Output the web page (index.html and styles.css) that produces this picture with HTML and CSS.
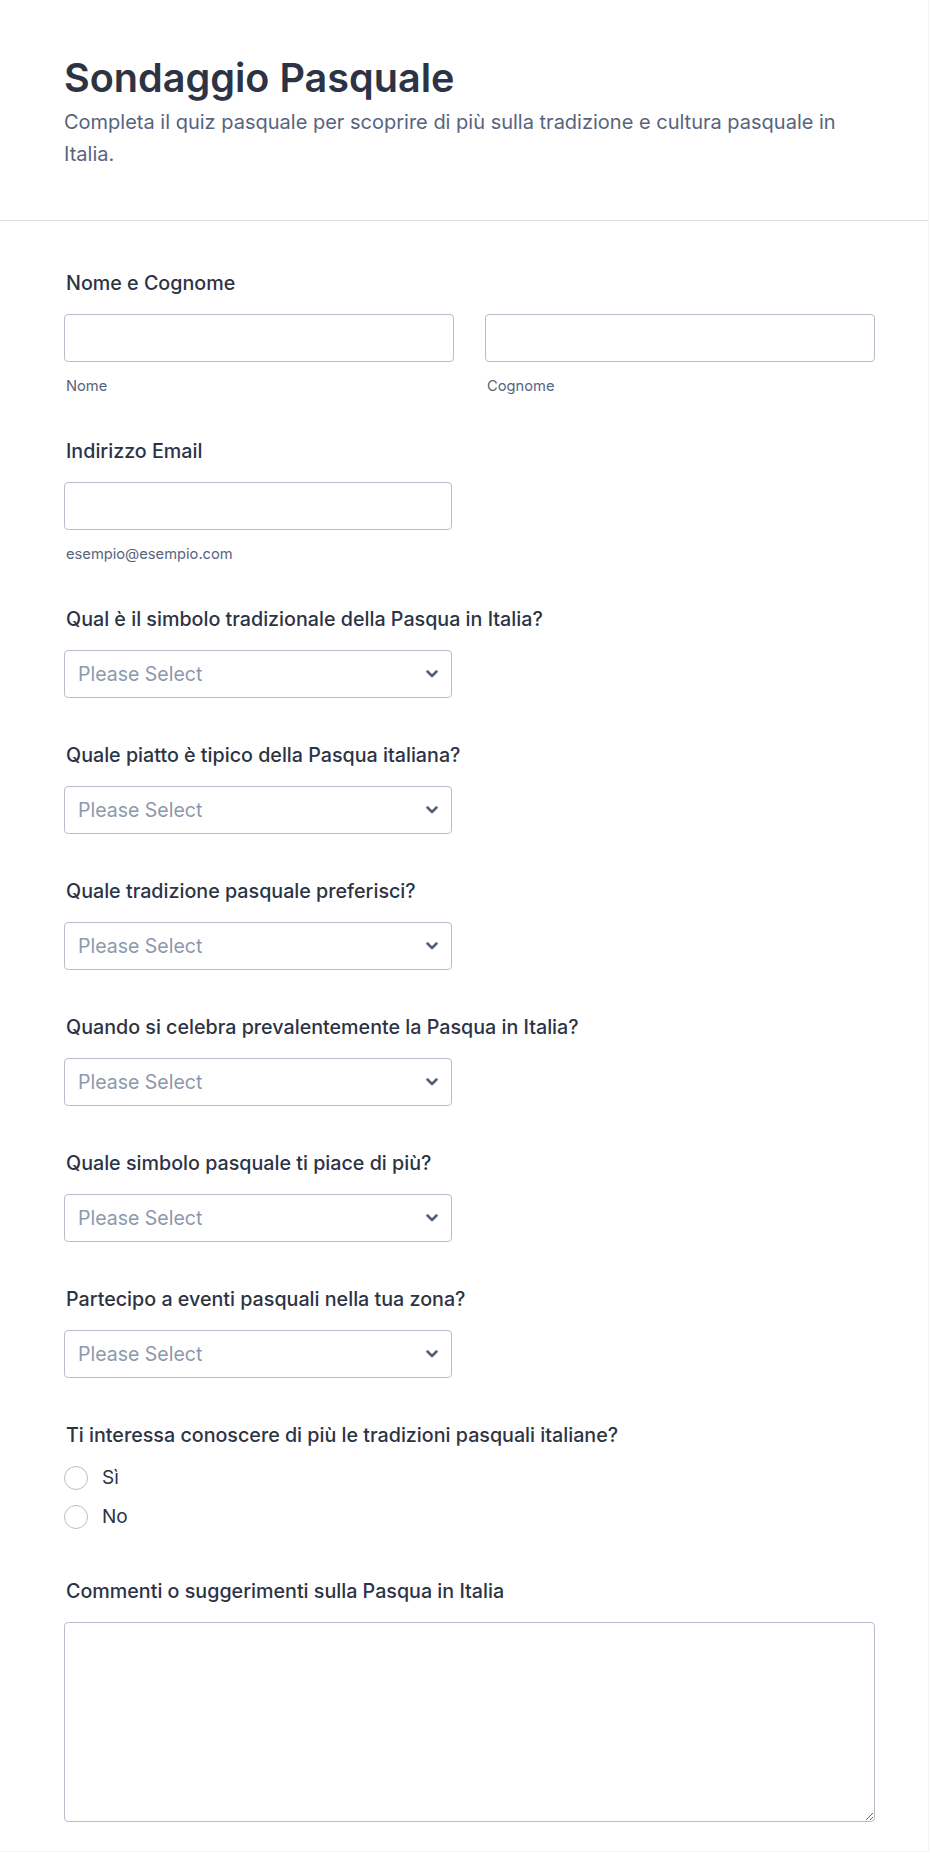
FILE: index.html
```html
<!DOCTYPE html>
<html lang="it">
<head>
<meta charset="utf-8">
<title>Sondaggio Pasquale</title>
<link rel="stylesheet" href="styles.css">
</head>
<body>
<div class="page">
  <header class="header">
    <h1 class="title">Sondaggio Pasquale</h1>
    <p class="subtitle">Completa il quiz pasquale per scoprire di più sulla tradizione e cultura pasquale in Italia.</p>
  </header>
  <form class="form">
    <div class="field field-sub">
      <label class="label">Nome e Cognome</label>
      <div class="two-col">
        <div class="col">
          <input class="input" type="text">
          <span class="sublabel">Nome</span>
        </div>
        <div class="col">
          <input class="input" type="text">
          <span class="sublabel">Cognome</span>
        </div>
      </div>
    </div>
    <div class="field field-sub">
      <label class="label">Indirizzo Email</label>
      <div class="half">
        <input class="input" type="email">
        <span class="sublabel">esempio@esempio.com</span>
      </div>
    </div>
    <div class="field">
      <label class="label">Qual è il simbolo tradizionale della Pasqua in Italia?</label>
      <div class="select-wrap">
        <select class="select"><option>Please Select</option></select>
        <svg class="chevron" width="12" height="8" viewBox="0 0 12 8"><path d="M1.5 1.5 L6 6 L10.5 1.5" fill="none" stroke="#4f5d78" stroke-width="2.5" stroke-linecap="round" stroke-linejoin="round"/></svg>
      </div>
    </div>
    <div class="field">
      <label class="label">Quale piatto è tipico della Pasqua italiana?</label>
      <div class="select-wrap">
        <select class="select"><option>Please Select</option></select>
        <svg class="chevron" width="12" height="8" viewBox="0 0 12 8"><path d="M1.5 1.5 L6 6 L10.5 1.5" fill="none" stroke="#4f5d78" stroke-width="2.5" stroke-linecap="round" stroke-linejoin="round"/></svg>
      </div>
    </div>
    <div class="field">
      <label class="label">Quale tradizione pasquale preferisci?</label>
      <div class="select-wrap">
        <select class="select"><option>Please Select</option></select>
        <svg class="chevron" width="12" height="8" viewBox="0 0 12 8"><path d="M1.5 1.5 L6 6 L10.5 1.5" fill="none" stroke="#4f5d78" stroke-width="2.5" stroke-linecap="round" stroke-linejoin="round"/></svg>
      </div>
    </div>
    <div class="field">
      <label class="label">Quando si celebra prevalentemente la Pasqua in Italia?</label>
      <div class="select-wrap">
        <select class="select"><option>Please Select</option></select>
        <svg class="chevron" width="12" height="8" viewBox="0 0 12 8"><path d="M1.5 1.5 L6 6 L10.5 1.5" fill="none" stroke="#4f5d78" stroke-width="2.5" stroke-linecap="round" stroke-linejoin="round"/></svg>
      </div>
    </div>
    <div class="field">
      <label class="label">Quale simbolo pasquale ti piace di più?</label>
      <div class="select-wrap">
        <select class="select"><option>Please Select</option></select>
        <svg class="chevron" width="12" height="8" viewBox="0 0 12 8"><path d="M1.5 1.5 L6 6 L10.5 1.5" fill="none" stroke="#4f5d78" stroke-width="2.5" stroke-linecap="round" stroke-linejoin="round"/></svg>
      </div>
    </div>
    <div class="field">
      <label class="label">Partecipo a eventi pasquali nella tua zona?</label>
      <div class="select-wrap">
        <select class="select"><option>Please Select</option></select>
        <svg class="chevron" width="12" height="8" viewBox="0 0 12 8"><path d="M1.5 1.5 L6 6 L10.5 1.5" fill="none" stroke="#4f5d78" stroke-width="2.5" stroke-linecap="round" stroke-linejoin="round"/></svg>
      </div>
    </div>
    <div class="field field-radio">
      <label class="label">Ti interessa conoscere di più le tradizioni pasquali italiane?</label>
      <div class="radios">
        <label class="radio-row"><input class="radio" type="radio" name="interesse"><span>Sì</span></label>
        <label class="radio-row"><input class="radio" type="radio" name="interesse"><span>No</span></label>
      </div>
    </div>
    <div class="field field-last">
      <label class="label">Commenti o suggerimenti sulla Pasqua in Italia</label>
      <textarea class="textarea"></textarea>
    </div>
  </form>
</div>
</body>
</html>
```

FILE: styles.css
```css
* { box-sizing: border-box; }
html, body { margin: 0; padding: 0; background: #ffffff; }
body {
  font-family: Inter, "Noto Sans", "Liberation Sans", sans-serif;
  color: #2c3345;
}
.page {
  width: 929px;
  min-height: 1851px;
  background: #fff;
  border-right: 1px solid #f4f5f8;
  border-bottom: 1px solid #f4f5f8;
}
.header {
  padding: 54px 64px 50px 64px;
  border-bottom: 1px solid #dadde6;
}
.title {
  margin: 0;
  font-size: 39.6px;
  line-height: 48px;
  font-weight: 600;
  color: #2c3345;
}
.subtitle {
  margin: 4px 0 0 0;
  font-size: 20px;
  line-height: 32px;
  color: #57647e;
}
.form {
  padding: 48px 54px 29px 64px;
  display: flex;
  flex-direction: column;
}
.field { display: flex; flex-direction: column; margin-bottom: 43px; }
.field-sub { margin-bottom: 41px; }
.field-radio { margin-bottom: 48px; }
.field-last { margin-bottom: 0; }
.label {
  font-size: 19.7px;
  line-height: 28px;
  font-weight: 500;
  color: #2c3345;
  margin-bottom: 17px;
  padding-left: 2px;
}
.two-col { display: grid; grid-template-columns: 390px 390px; column-gap: 31px; }
.col, .half { display: flex; flex-direction: column; }
.half { width: 388px; }
.input {
  height: 48px;
  width: 100%;
  border: 1px solid #b8bdc9;
  border-radius: 4px;
  background: #fff;
  font: inherit;
}
.sublabel {
  margin-top: 14px;
  font-size: 14.7px;
  line-height: 20px;
  color: #57647e;
  padding-left: 2px;
}
.select-wrap { position: relative; width: 388px; height: 48px; }
.select {
  -webkit-appearance: none;
  appearance: none;
  width: 100%;
  height: 48px;
  border: 1px solid #b8bdc9;
  border-radius: 4px;
  background: #fff;
  padding: 0 40px 0 13px;
  font-family: Inter, "Noto Sans", sans-serif;
  font-size: 19.5px;
  color: #8c98ad;
}
.chevron { position: absolute; right: 14px; top: 20px; pointer-events: none; }
.radios { display: flex; flex-direction: column; gap: 15px; }
.radio-row {
  display: flex;
  align-items: center;
  gap: 14px;
  height: 24px;
  font-size: 19px;
  line-height: 24px;
  color: #2c3345;
}
.radio {
  -webkit-appearance: none;
  appearance: none;
  margin: 0;
  width: 24px;
  height: 24px;
  border: 1px solid #b8bdc9;
  border-radius: 50%;
  background: #fff;
  flex: none;
}
.textarea {
  display: block;
  width: 811px;
  height: 200px;
  border: 1px solid #b8bdc9;
  border-radius: 4px;
  background: #fff;
  font: inherit;
  resize: both;
}
```
